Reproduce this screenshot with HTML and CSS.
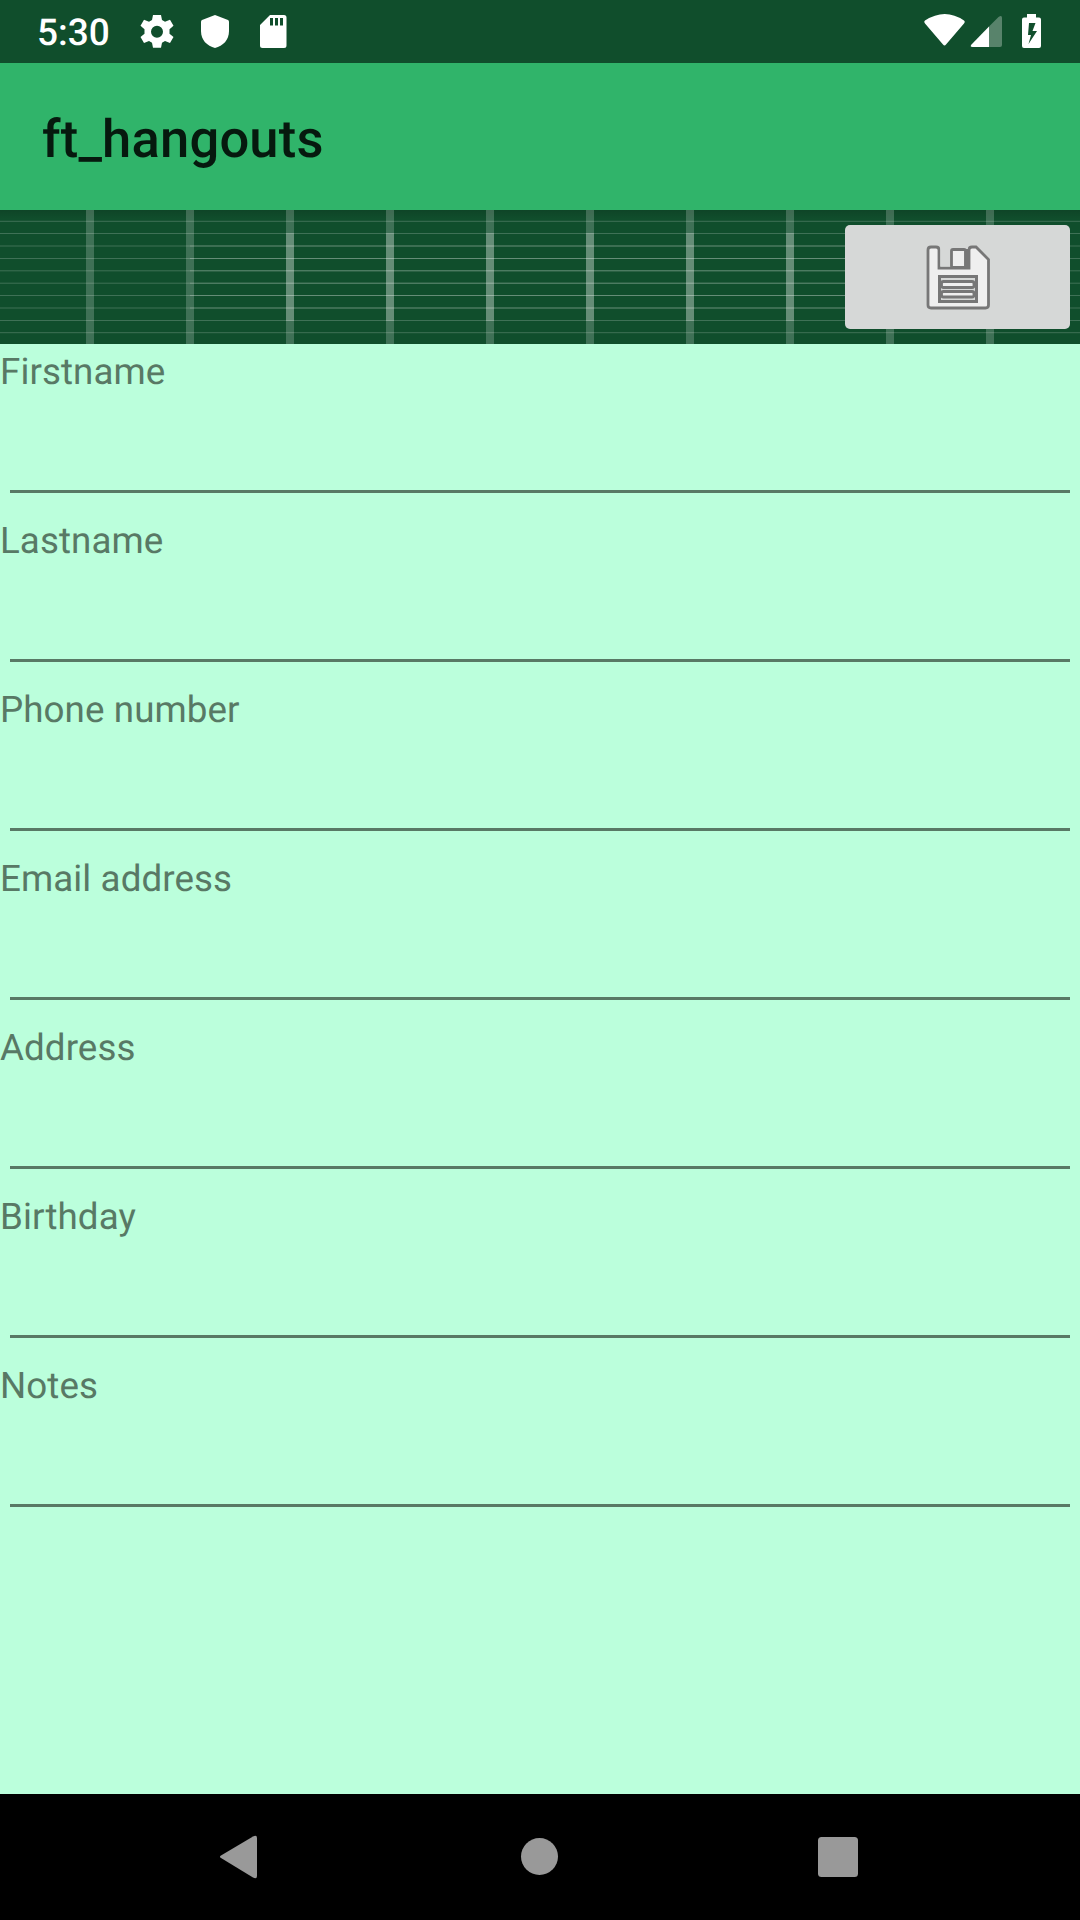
FILE: index.html
```html
<!DOCTYPE html>
<html lang="en">
<head>
<meta charset="utf-8">
<title>ft_hangouts</title>
<link rel="stylesheet" href="styles.css">
</head>
<body>
<header class="status">
  <span class="clock">5:30</span>
  <svg class="status-left" width="150" height="36" viewBox="138 14 150 36" fill="#fff">
    <path fill-rule="evenodd" d="M153 15h8l1 5 3 1.800 5-2 3.500 6-4 3.500v4.400l4 3.300-3.500 6-5-2-3 1.800-1 5h-8l-1-5-3-1.800-5 2-3.500-6 4-3.300v-4.400l-4-3.500 3.500-6 5 2 3-1.800zM157 25.700a6 6 0 1 0 0 12 6 6 0 0 0 0-12z"/>
    <path d="M215 15l13 5q1 .4 1 2v9c0 9-6 15-14 17-8-2-14-8-14-17v-9q0-1.600 1-2z"/>
    <path fill-rule="evenodd" d="M270 15h14q2.500 0 2.500 2.500v28q0 2.500-2.500 2.500h-21.500q-2.500 0-2.500-2.500V25zM270 18v7.500h3V18zm5 0v7.500h3V18zm5 0v7.500h3V18z"/>
  </svg>
  <svg class="status-right" width="120" height="36" viewBox="924 13 120 36" fill="#fff">
    <path d="M925 20.500q20-13 39 0 1.500 1.200 0 3L946 44.500q-1.500 2-3 0L925 23.500q-1.500-1.800 0-3z"/>
    <path opacity=".3" d="M989 26.500l9.500-9.500q3.500-2.500 3.500 1v27q0 2-2 2h-11z"/>
    <path d="M989 26.500V47h-16.500q-3 0-1-2.500z"/>
    <path fill-rule="evenodd" d="M1027 14h9v3.500h3q2 0 2 2V46q0 2-2 2h-15q-2 0-2-2V19.500q0-2 2-2h3zM1029 23l-1 12h3l-2.500 9 8.500-13h-4.500l3-8z"/>
  </svg>
</header>
<div class="app-bar"><h1>ft_hangouts</h1></div>
<div class="toolbar">
  <svg class="grid" width="1080" height="134" viewBox="0 210 1080 134" fill="none" stroke="#fff" stroke-opacity=".2">
    <path d="M0 221.300h1080M0 233.500h1080M0 246h1080M0 258.500h1080M0 270.800h1080M0 283.200h1080M0 295.500h1080M0 308h1080M0 320.500h1080M0 332.700h1080"/>
    <path d="M190 246h700M190 258.500h700M190 270.800h700M190 283.200h700M190 295.500h700M190 308h700"/>
    <path stroke-width="8" d="M90 210v134M190 210v134M290 210v134M390 210v134M490 210v134M590 210v134M690 210v134M790 210v134M890 210v134M990 210v134"/>
    <path stroke-width="8" d="M290 233v88M390 233v88M490 233v88M590 233v88M690 233v88M790 233v88"/>
  </svg>
  <button class="save" aria-label="Save">
    <svg width="66" height="68" viewBox="925 243 66 68" fill="#efefef" stroke="#777" stroke-width="2.800">
      <path d="M931 247h5q3 0 3 3v18h30v-18q0-3 3-3h4l12.500 12.500V305q0 3-3 3H931q-3 0-3-3V250q0-3 3-3z"/>
      <path fill="#d6d8d7" stroke="none" d="M940.300 245h27.400v21.700h-27.400z"/>
      <rect x="951.500" y="249.500" width="14" height="18" rx="1.500"/>
      <path d="M966.800 249v19" stroke-width="4.500"/>
      <rect x="939.500" y="276.500" width="37" height="25" fill="#d6d8d7" stroke-width="3"/>
      <rect x="941.500" y="281.500" width="32.500" height="6" rx="2"/>
      <rect x="941.500" y="291.500" width="32.500" height="5.500" rx="2"/>
    </svg>
  </button>
</div>
<main class="form">
  <label class="field">Firstname<input class="entry" type="text"></label>
  <label class="field">Lastname<input class="entry" type="text"></label>
  <label class="field">Phone number<input class="entry" type="text"></label>
  <label class="field">Email address<input class="entry" type="text"></label>
  <label class="field">Address<input class="entry" type="text"></label>
  <label class="field">Birthday<input class="entry" type="text"></label>
  <label class="field">Notes<input class="entry" type="text"></label>
</main>
<nav class="nav">
  <svg width="1080" height="126" viewBox="0 1794 1080 126" fill="#999">
    <path d="M221 1855.500l32-19q4-2 4 1.500v38q0 3.500-4 1.500l-32-19.500q-2-1.300 0-2.500z"/>
    <circle cx="539.500" cy="1856.500" r="18.500"/>
    <rect x="818" y="1837" width="40" height="40" rx="3.500"/>
  </svg>
</nav>
</body>
</html>
```
FILE: styles.css
```css
* { box-sizing: border-box; }
body {
  margin: 0;
  height: 1920px;
  display: flex;
  flex-direction: column;
  background: #bbffdc;
  font-family: Roboto, sans-serif;
  text-rendering: geometricPrecision;
}
svg { display: block; }
.status {
  height: 63px;
  flex: none;
  display: flex;
  background: #104e2c;
  color: #fff;
}
.clock {
  width: 101px;
  margin-left: 37px;
  font-size: 37px;
  font-weight: 500;
  line-height: 68px;
}
.status-left { margin-top: 14px; }
.status-right { margin: 13px 36px 0 auto; }
.app-bar {
  height: 147px;
  flex: none;
  padding-left: 42px;
  background: #30b46a;
}
.app-bar h1 {
  margin: 0;
  font-size: 52.500px;
  font-weight: 500;
  line-height: 152px;
  letter-spacing: .2px;
  color: #06190e;
}
.toolbar {
  position: relative;
  height: 134px;
  flex: none;
  display: flex;
  justify-content: flex-end;
  padding: 15px 10px;
  background: linear-gradient(rgba(0, 0, 0, .12), transparent 9px), #104e2c;
}
.grid {
  position: absolute;
  left: 0;
  top: 0;
}
.save {
  position: relative;
  width: 225px;
  height: 104px;
  padding: 0;
  display: flex;
  align-items: center;
  justify-content: center;
  border: 0;
  border-radius: 5px;
  background: #d6d8d7;
}
.form { flex: 1; }
.field {
  display: block;
  height: 169px;
  font-size: 36.750px;
  line-height: 56px;
  letter-spacing: .08px;
  color: #587965;
}
.entry {
  display: block;
  width: 1060px;
  height: 92px;
  margin: 1px 10px 0;
  padding: 0 0 8px;
  border: 0;
  border-bottom: 3px solid #587965;
  background: transparent;
  font: inherit;
  outline: none;
}
.nav {
  height: 126px;
  flex: none;
  background: #000;
}
```
